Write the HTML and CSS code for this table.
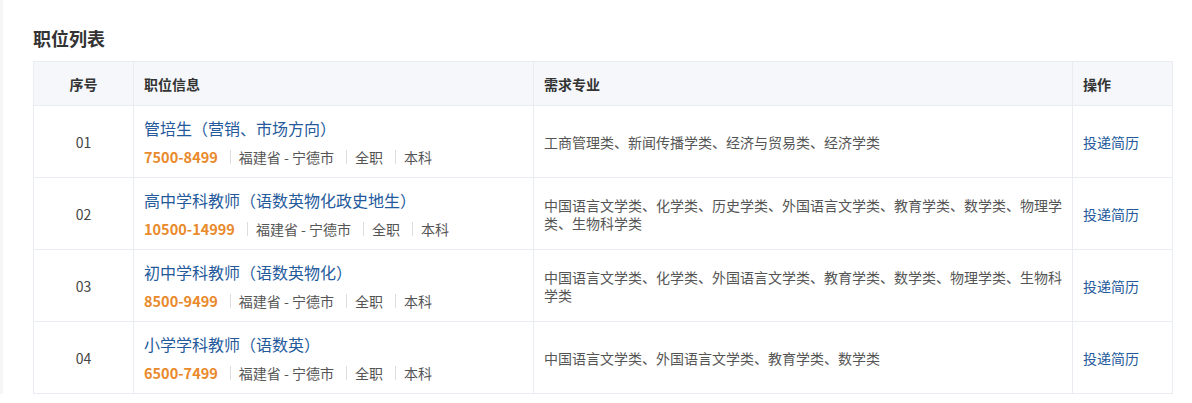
FILE: index.html
```html
<!DOCTYPE html>
<html lang="zh-CN">
<head>
<meta charset="utf-8">
<link rel="stylesheet" href="styles.css">
</head>
<body>
<div class="page">
  <h2 class="title">职位列表</h2>
  <table class="jobs">
    <colgroup>
      <col class="c-no"><col class="c-info"><col class="c-major"><col class="c-op">
    </colgroup>
    <thead>
      <tr><th class="no">序号</th><th>职位信息</th><th>需求专业</th><th>操作</th></tr>
    </thead>
    <tbody>
      <tr>
        <td class="no">01</td>
        <td><div class="job">管培生（营销、市场方向）</div>
          <div class="meta"><span class="pay">7500-8499</span><span class="sep"></span>福建省 - 宁德市<span class="sep"></span>全职<span class="sep"></span>本科</div></td>
        <td class="major">工商管理类、新闻传播学类、经济与贸易类、经济学类</td>
        <td><a class="op">投递简历</a></td>
      </tr>
      <tr>
        <td class="no">02</td>
        <td><div class="job">高中学科教师（语数英物化政史地生）</div>
          <div class="meta"><span class="pay">10500-14999</span><span class="sep"></span>福建省 - 宁德市<span class="sep"></span>全职<span class="sep"></span>本科</div></td>
        <td class="major">中国语言文学类、化学类、历史学类、外国语言文学类、教育学类、数学类、物理学类、生物科学类</td>
        <td><a class="op">投递简历</a></td>
      </tr>
      <tr>
        <td class="no">03</td>
        <td><div class="job">初中学科教师（语数英物化）</div>
          <div class="meta"><span class="pay">8500-9499</span><span class="sep"></span>福建省 - 宁德市<span class="sep"></span>全职<span class="sep"></span>本科</div></td>
        <td class="major">中国语言文学类、化学类、外国语言文学类、教育学类、数学类、物理学类、生物科学类</td>
        <td><a class="op">投递简历</a></td>
      </tr>
      <tr>
        <td class="no">04</td>
        <td><div class="job">小学学科教师（语数英）</div>
          <div class="meta"><span class="pay">6500-7499</span><span class="sep"></span>福建省 - 宁德市<span class="sep"></span>全职<span class="sep"></span>本科</div></td>
        <td class="major">中国语言文学类、外国语言文学类、教育学类、数学类</td>
        <td><a class="op">投递简历</a></td>
      </tr>
    </tbody>
  </table>
</div>
</body>
</html>
```

FILE: styles.css
```css
html, body {
  margin: 0;
  padding: 0;
  background: #fff;
}
body {
  font-family: "Noto Sans CJK SC", "Liberation Sans", sans-serif;
  color: #333;
  border-left: 3px solid #f6f6f6;
  text-spacing-trim: space-all;
}
.page {
  padding: 27px 19px 0 30px;
}
.title {
  margin: 0 0 11px;
  font-size: 18px;
  line-height: 23px;
  font-weight: 700;
  color: #333;
}
.jobs {
  width: 1140px;
  border-collapse: collapse;
  table-layout: fixed;
  border: 1px solid #e9ecf0;
}
.c-no { width: 100px; }
.c-info { width: 400px; }
.c-major { width: 539px; }
.c-op { width: 100px; }
.jobs th,
.jobs td {
  border: 1px solid #e9ecf0;
  padding: 0 10px;
  text-align: left;
  vertical-align: middle;
}
.jobs th {
  height: 43px;
  background: #f5f7fa;
  font-size: 14px;
  font-weight: 700;
  color: #333;
}
.jobs td {
  height: 71px;
  font-size: 14px;
  color: #555;
}
.jobs .no {
  text-align: center;
}
.jobs td.no {
  font-size: 14px;
  color: #444;
}
.job {
  font-size: 16px;
  line-height: 24px;
  color: #245a9b;
  margin-bottom: 7px;
}
.meta {
  font-size: 14px;
  line-height: 20px;
  color: #555;
  display: flex;
  align-items: center;
}
.pay {
  font-size: 14.5px;
  font-weight: 700;
  color: #e98a2b;
}
.sep {
  display: inline-block;
  width: 1px;
  height: 14px;
  background: #ddd;
  margin: 0 8px 0 12px;
}
.major {
  line-height: 18px;
}
.op {
  color: #245a9b;
  font-size: 14px;
  text-decoration: none;
  cursor: pointer;
}
```
